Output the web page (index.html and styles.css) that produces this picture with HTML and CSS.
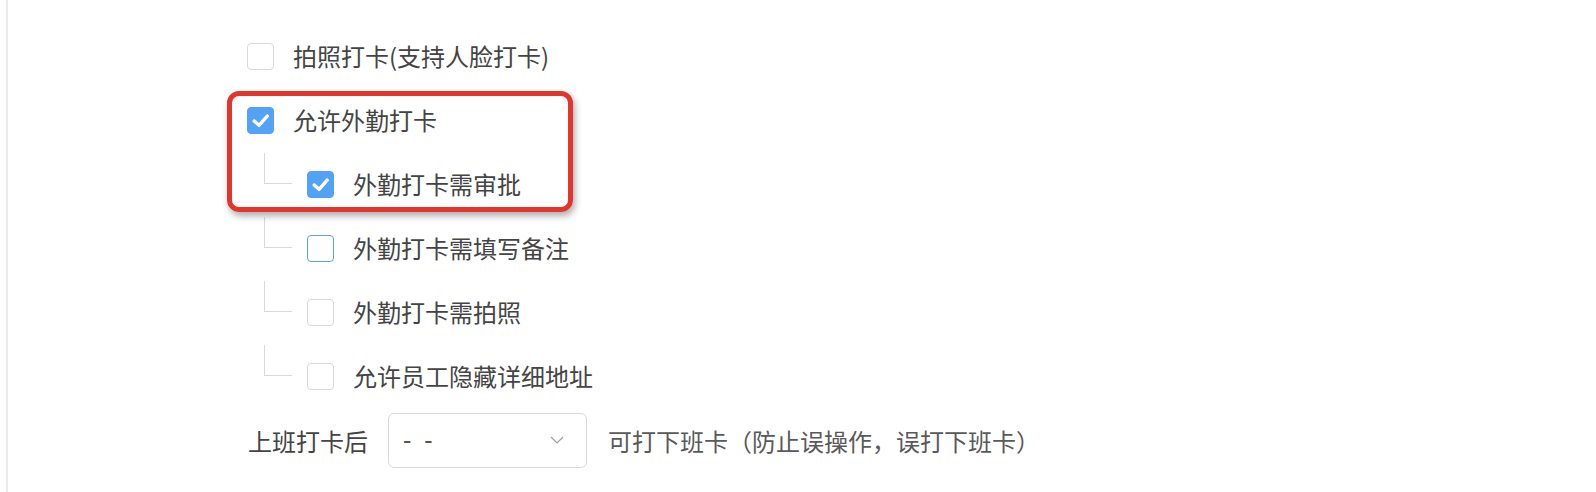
FILE: index.html
```html
<!DOCTYPE html>
<html lang="zh-CN">
<head>
<meta charset="utf-8">
<title>打卡设置</title>
<link rel="stylesheet" href="styles.css">
</head>
<body>
<div class="page">
  <div class="panel">
    <div class="form">
      <div class="row">
        <span class="cb"></span>
        <span class="label">拍照打卡(支持人脸打卡)</span>
      </div>
      <div class="group">
        <div class="row">
          <span class="cb checked"><svg viewBox="0 0 26 26"><polyline points="6.5,13.5 11.5,18 20,8.5"/></svg></span>
          <span class="label">允许外勤打卡</span>
        </div>
        <div class="row nested">
          <span class="branch"></span>
          <span class="cb checked"><svg viewBox="0 0 26 26"><polyline points="6.5,13.5 11.5,18 20,8.5"/></svg></span>
          <span class="label">外勤打卡需审批</span>
        </div>
        <div class="highlight"></div>
      </div>
      <div class="row nested">
        <span class="branch"></span>
        <span class="cb hover"></span>
        <span class="label">外勤打卡需填写备注</span>
      </div>
      <div class="row nested">
        <span class="branch"></span>
        <span class="cb"></span>
        <span class="label">外勤打卡需拍照</span>
      </div>
      <div class="row nested">
        <span class="branch"></span>
        <span class="cb"></span>
        <span class="label">允许员工隐藏详细地址</span>
      </div>
      <div class="row select-row">
        <span class="plain">上班打卡后</span>
        <div class="select">
          <span class="value">- -</span>
          <svg class="arrow" viewBox="0 0 14 8"><polyline points="1,1 7,7 13,1"/></svg>
        </div>
        <span class="hint">可打下班卡（防止误操作，误打下班卡）</span>
      </div>
    </div>
  </div>
</div>
</body>
</html>
```

FILE: styles.css
```css
* { box-sizing: border-box; }
html, body {
  margin: 0;
  padding: 0;
  background: #ffffff;
}
body {
  font-family: "Noto Sans CJK SC", "Noto Sans", sans-serif;
  color: #444444;
  font-size: 24px;
}
.page {
  width: 1596px;
  height: 492px;
  padding-left: 6px;
}
.panel {
  height: 100%;
  border-left: 2px solid #ebebeb;
}
.form {
  padding-top: 24px;
  padding-left: 239px;
}
.row {
  height: 64px;
  display: flex;
  align-items: center;
}
.group {
  position: relative;
}
.highlight {
  position: absolute;
  left: -20px;
  top: 3px;
  width: 346px;
  height: 121px;
  border: 5px solid #e2352b;
  border-radius: 12px;
  box-shadow: 2px 4px 7px rgba(0, 0, 0, 0.32);
  pointer-events: none;
}
.cb {
  width: 27px;
  height: 27px;
  flex: none;
  border: 1.5px solid #d9d9d9;
  border-radius: 4px;
  background: #fff;
  display: flex;
  align-items: center;
  justify-content: center;
}
.cb.checked {
  background: #52a2f5;
  border-color: #52a2f5;
}
.cb.hover {
  border-color: #5aa4ee;
}
.cb svg {
  width: 27px;
  height: 27px;
  fill: none;
  stroke: #fff;
  stroke-width: 3.6;
  stroke-linecap: round;
  stroke-linejoin: round;
}
.label {
  margin-left: 19px;
  line-height: 1;
  white-space: nowrap;
}
.branch {
  align-self: flex-start;
  margin-top: 1px;
  margin-left: 17px;
  margin-right: 15px;
  width: 28px;
  height: 31px;
  border-left: 1px solid #d9d9d9;
  border-bottom: 1px solid #d9d9d9;
  flex: none;
}
.select-row .plain {
  white-space: nowrap;
  margin-left: 1px;
}
.select {
  margin-left: 20px;
  width: 199px;
  height: 55px;
  border: 1.5px solid #d9d9d9;
  border-radius: 6px;
  display: flex;
  align-items: center;
  justify-content: space-between;
  padding: 0 22px 0 14px;
}
.select .value {
  color: #555;
  font-size: 25px;
  letter-spacing: 3px;
  font-family: "Liberation Sans", sans-serif;
}
.select .arrow {
  width: 14px;
  height: 8px;
  fill: none;
  stroke: #a0a0a0;
  stroke-width: 1.2;
}
.hint {
  margin-left: 21px;
  color: #595959;
  white-space: nowrap;
}
```
